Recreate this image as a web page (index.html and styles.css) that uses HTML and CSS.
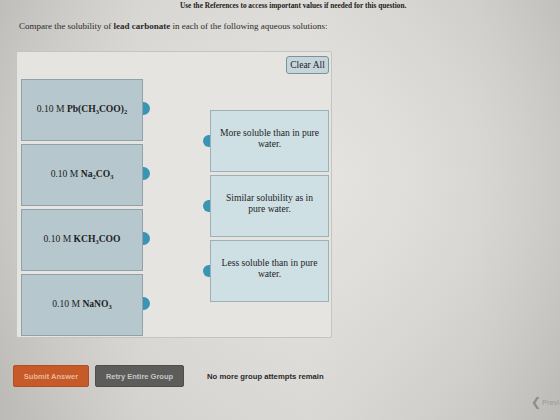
FILE: index.html
```html
<!DOCTYPE html>
<html>
<head>
<meta charset="utf-8">
<link rel="stylesheet" href="styles.css">
</head>
<body>
<div class="page">
  <div class="notice">Use the References to access important values if needed for this question.</div>
  <p class="prompt">Compare the solubility of <b>lead carbonate</b> in each of the following aqueous solutions:</p>
  <div class="panel">
    <div class="panel-head"><button class="clear">Clear All</button></div>
    <div class="columns">
      <div class="col left">
        <div class="item">0.10 M&nbsp;<b>Pb(CH<sub>3</sub>COO)<sub>2</sub></b></div>
        <div class="item">0.10 M&nbsp;<b>Na<sub>2</sub>CO<sub>3</sub></b></div>
        <div class="item">0.10 M&nbsp;<b>KCH<sub>3</sub>COO</b></div>
        <div class="item">0.10 M&nbsp;<b>NaNO<sub>3</sub></b></div>
      </div>
      <div class="col right">
        <div class="target">More soluble than in pure water.</div>
        <div class="target">Similar solubility as in pure water.</div>
        <div class="target">Less soluble than in pure water.</div>
      </div>
    </div>
  </div>
  <div class="actions">
    <button class="btn submit">Submit Answer</button>
    <button class="btn retry">Retry Entire Group</button>
    <span class="status">No more group attempts remain</span>
  </div>
  <div class="prev"><span class="chev">&#10094;</span>Previ</div>
</div>
</body>
</html>
```
FILE: styles.css
```css
html, body {
  margin: 0;
  padding: 0;
  width: 560px;
  height: 420px;
  overflow: hidden;
}
body {
  background:
    radial-gradient(ellipse 420px 300px at 300px 180px, rgba(232,230,226,0.9), rgba(232,230,226,0) 100%),
    linear-gradient(90deg, #bdbbb7 0%, #d2d0cc 25%, #d8d6d2 55%, #c9c7c3 85%, #bcbab6 100%);
  font-family: "Liberation Serif", "Times New Roman", serif;
  color: #1e1e1e;
}
.page {
  position: relative;
  height: 420px;
}
.notice {
  padding: 1px 0 0 180px;
  font-size: 7.3px;
  font-weight: bold;
  line-height: 9px;
  color: #202020;
}
.prompt {
  margin: 11px 0 0 19px;
  font-size: 9px;
  line-height: 10px;
  color: #2a2a2a;
}
.panel {
  margin: 20px 0 0 16px;
  width: 316px;
  height: 287px;
  border: 1px solid #c4c4c0;
  border-radius: 2px;
  background: #e5e4e0;
  box-sizing: border-box;
  padding: 3px 2px 0 3px;
}
.panel-head {
  display: flex;
  justify-content: flex-end;
  height: 21px;
}
.clear {
  font-family: "Liberation Serif", "Times New Roman", serif;
  font-size: 9.5px;
  color: #222;
  background: #c4d6dc;
  border: 1px solid #7f9298;
  border-radius: 3px;
  width: 43px;
  height: 18px;
  padding: 0;
  margin-top: 1px;
}
.columns {
  display: flex;
  justify-content: space-between;
  margin-top: 3px;
}
.col {
  display: flex;
  flex-direction: column;
  gap: 3px;
}
.left { width: 122px; margin-left: 1px; }
.right { width: 119px; margin-top: 31px; }
.item, .target {
  position: relative;
  height: 62px;
  box-sizing: border-box;
  display: flex;
  align-items: center;
  justify-content: center;
  text-align: center;
  font-size: 9.6px;
  line-height: 11px;
  color: #1e1e1e;
}
.item {
  background: #b6c7ce;
  border: 1px solid #8fa2aa;
  padding-bottom: 4px;
}
.target {
  background: #cfe0e5;
  border: 1px solid #9cb0b6;
  padding: 0 7px 6px;
}
sub {
  font-size: 6.5px;
  line-height: 0;
  vertical-align: -2px;
}
.item::after {
  content: "";
  position: absolute;
  right: -8px;
  top: 22px;
  width: 7px;
  height: 13px;
  border-radius: 0 7px 7px 0;
  background: #3a94b4;
}
.target::before {
  content: "";
  position: absolute;
  left: -8px;
  top: 24px;
  width: 7px;
  height: 12px;
  border-radius: 7px 0 0 7px;
  background: #3a94b4;
}
.actions {
  display: flex;
  align-items: center;
  margin: 27px 0 0 13px;
  gap: 6px;
}
.btn {
  font-family: "Liberation Sans", Arial, sans-serif;
  font-weight: bold;
  font-size: 7.5px;
  height: 22px;
  border-radius: 2px;
  padding: 0;
  border: none;
}
.submit {
  width: 76px;
  background: #c65a28;
  color: #e9b89c;
  border: 1px solid #b24e20;
}
.retry {
  width: 89px;
  background: #5c5c5a;
  color: #c7c7c5;
  border: 1px solid #4e4e4c;
}
.status {
  margin-left: 17px;
  font-family: "Liberation Sans", Arial, sans-serif;
  font-weight: bold;
  font-size: 7.7px;
  color: #2a2a2a;
}
.prev {
  position: absolute;
  left: 531px;
  top: 395px;
  font-family: "Liberation Sans", Arial, sans-serif;
  font-size: 7.5px;
  color: #9a9a98;
  display: flex;
  align-items: center;
}
.chev {
  font-size: 12px;
  color: #8c8c8a;
  margin-right: 1px;
}
```
